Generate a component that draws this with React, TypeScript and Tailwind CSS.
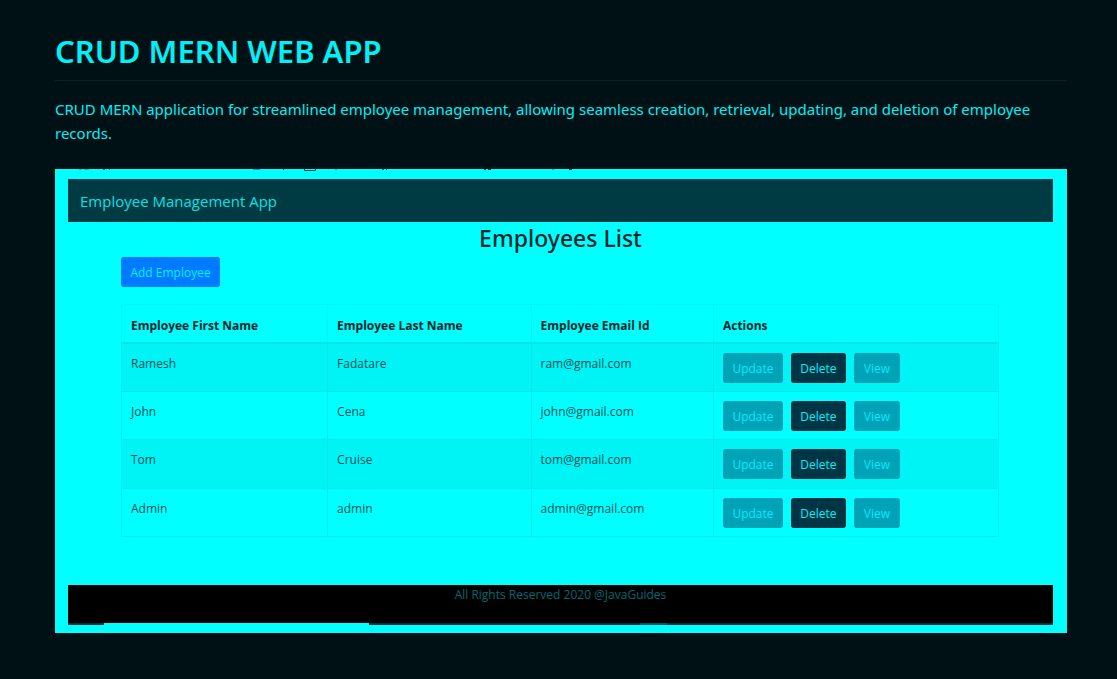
const employees = [
  { first: "Ramesh", last: "Fadatare", email: "ram@gmail.com" },
  { first: "John", last: "Cena", email: "john@gmail.com" },
  { first: "Tom", last: "Cruise", email: "tom@gmail.com" },
  { first: "Admin", last: "admin", email: "admin@gmail.com" },
];

const cell = "border border-[#00eaec] px-[9px] align-top";

function AddButton() {
  return (
    <button type="button" className="h-[30px] w-[99px] rounded-[3px] bg-[#007bff] pt-[2px] text-[12px] whitespace-nowrap text-[#00f0ff]">
      Add Employee
    </button>
  );
}

function RowActions() {
  return (
    <div className="flex gap-2 pt-[9px]">
      <button type="button" className="h-[30px] w-[60px] rounded-[3px] bg-[#00a2b8] pt-[2px] text-[12px] text-[#00eaff]">
        Update
      </button>
      <button type="button" className="h-[30px] w-[55px] rounded-[3px] bg-[#003545] pt-[2px] text-[12px] text-[#00f0f5]">
        Delete
      </button>
      <button type="button" className="h-[30px] w-[46px] rounded-[3px] bg-[#00a2b8] pt-[2px] text-[12px] text-[#00eaff]">
        View
      </button>
    </div>
  );
}

function EmployeeTable() {
  return (
    <table className="mt-[17px] h-[233px] w-full table-fixed border-collapse text-left text-[12px] leading-[18px] text-[#005056]">
      <colgroup>
        <col className="w-[23.5%]" />
        <col className="w-[23.2%]" />
        <col className="w-[20.8%]" />
        <col />
      </colgroup>
      <thead>
        <tr className="h-[38px] text-[#00262b]">
          {["Employee First Name", "Employee Last Name", "Employee Email Id", "Actions"].map((label) => (
            <th key={label} scope="col" className="border border-b-2 border-[#00f3f5] border-b-[#00e4e7] px-[9px] pt-[5px] font-bold">
              {label}
            </th>
          ))}
        </tr>
      </thead>
      <tbody>
        {employees.map((e) => (
          <tr key={e.email} className="h-12 odd:bg-[#00f3f5]">
            <td className={cell + " pt-[11px]"}>{e.first}</td>
            <td className={cell + " pt-[11px]"}>{e.last}</td>
            <td className={cell + " pt-[11px]"}>{e.email}</td>
            <td className={cell}>
              <RowActions />
            </td>
          </tr>
        ))}
      </tbody>
    </table>
  );
}

function ToolbarEdge() {
  return (
    <svg className="block h-[10px] w-[600px]" viewBox="13 0 600 10" aria-hidden="true">
      <path d="M24 0h3v1h-3zM29 0h5v1h-5z" fill="#00c8b8" />
      <path d="M48 0h2v1h-2zM54 0h1v1h-1z" fill="#00848c" />
      <path d="M198 0h7v1h-7z" fill="#00a0e8" />
      <path d="M228 0h1v1h-1zM327 0h2v1h-2zM331 0h1v1h-1z" fill="#006870" />
      <path d="M249.500 0v1.500h11v-1.500" fill="none" stroke="#00484c" />
      <path d="M280 0h2v1h-2zM497 0h2v1h-2z" fill="#00c0c8" />
      <path d="M429 0h2v1h-2zM433 0h3v1h-3zM514 0h3v1h-3z" fill="#003338" />
    </svg>
  );
}

export default function App() {
  return (
    <main className="min-h-screen bg-[#001116] pt-[29px] pr-[50px] pb-[46px] pl-[55px] font-['Noto_Sans',sans-serif]">
      <h1 className="border-b border-[#00262b] pb-[7px] text-[31px] leading-[44px] font-semibold text-[#00f0f5]">
        CRUD MERN WEB APP
      </h1>
      <p className="mt-4 text-[15px] leading-6 text-[#00f0f5]">
        CRUD MERN application for streamlined employee management, allowing seamless creation, retrieval, updating, and
        deletion of employee records.
      </p>
      <section className="mt-6 bg-[#00ffff] pr-[14px] pb-2 pl-[13px] font-['Open_Sans',sans-serif]">
        <ToolbarEdge />
        <header className="flex h-[43px] items-center bg-[#003a42] px-3 pt-px text-[15px] text-[#00e5e8]">
          <span>Employee Management App</span>
        </header>
        <h2 className="pb-[3px] text-center font-['Noto_Sans',sans-serif] text-[23px] leading-8 font-medium text-[#00262b]">
          Employees List
        </h2>
        <div className="pr-[54px] pl-[53px]">
          <AddButton />
          <EmployeeTable />
        </div>
        <footer className="mt-12 flex h-10 flex-col justify-between bg-black text-center text-[12px] leading-5 text-[#006870]">
          <span>All Rights Reserved 2020 @JavaGuides</span>
          <div className="flex h-[2px] bg-[#003338]">
            <div className="w-[3.7%]" />
            <div className="w-[26.9%] bg-[#00ffff]" />
            <div className="w-[27.5%]" />
            <div className="w-[2.7%] bg-[#005860]" />
          </div>
        </footer>
      </section>
    </main>
  );
}
